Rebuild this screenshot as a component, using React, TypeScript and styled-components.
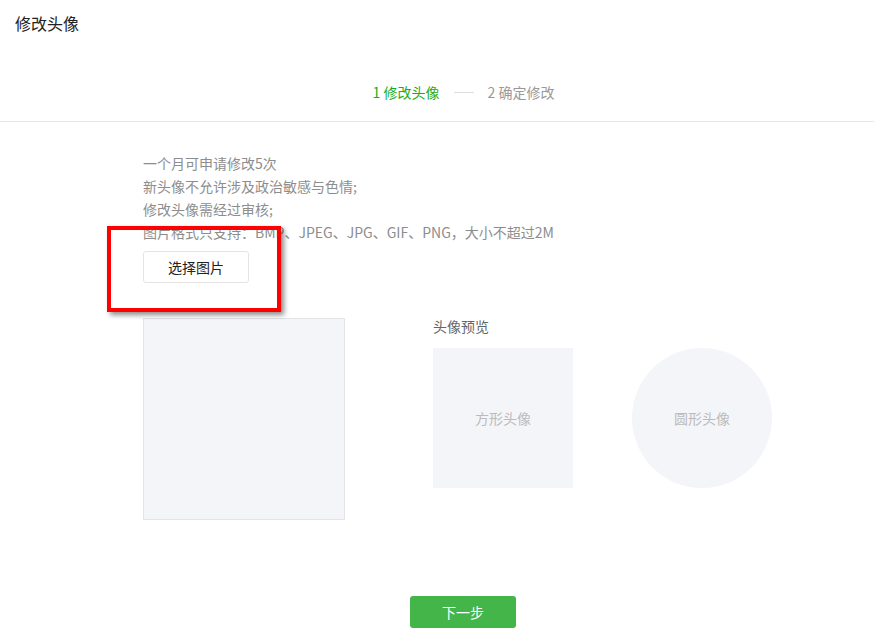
import styled, { createGlobalStyle } from "styled-components";

const GlobalStyle = createGlobalStyle`
  html, body {
    margin: 0;
    padding: 0;
    background: #fff;
  }
  body {
    font-family: "Microsoft YaHei", "Noto Sans CJK SC", "Liberation Sans", sans-serif;
    font-size: 14px;
    color: #222;
  }
`;

const Page = styled.div`
  position: relative;
  width: 874px;
  height: 641px;
  overflow: hidden;
`;

const Title = styled.h2`
  margin: 0;
  padding: 11px 15px 0;
  height: 36px;
  font-size: 16px;
  font-weight: normal;
  line-height: 24px;
  color: #222;
`;

const Steps = styled.div`
  display: flex;
  justify-content: center;
  align-items: center;
  gap: 14px;
  height: 20px;
  padding: 35px 0 19px 53px;
  border-bottom: 1px solid #e7e7eb;
`;

const Step = styled.span<{ $active?: boolean }>`
  font-size: 14px;
  line-height: 20px;
  color: ${(p) => (p.$active ? "#1aad19" : "#999")};
`;

const StepLine = styled.span`
  width: 20px;
  height: 1px;
  background: #ddd;
`;

const Body = styled.div`
  padding: 30px 0 0 143px;
`;

const Tips = styled.ul`
  list-style: none;
  margin: 0;
  padding: 0;
  color: #8d8d8d;
  font-size: 14px;
  line-height: 23px;
`;

const SelectButton = styled.button`
  display: block;
  margin-top: 7px;
  width: 106px;
  height: 32px;
  border: 1px solid #e4e4e4;
  border-radius: 3px;
  background: #fff;
  font: inherit;
  font-size: 14px;
  color: #222;
`;

const Workspace = styled.div`
  display: flex;
  margin-top: 35px;
`;

const Canvas = styled.div`
  width: 200px;
  height: 200px;
  border: 1px solid #e4e4e8;
  background: #f4f5f9;
`;

const Preview = styled.div`
  margin-left: 88px;
  margin-top: -2px;
`;

const PreviewLabel = styled.div`
  font-size: 14px;
  line-height: 20px;
  color: #666;
`;

const PreviewRow = styled.div`
  display: flex;
  gap: 59px;
  margin-top: 12px;
`;

const Avatar = styled.div<{ $round?: boolean }>`
  width: 140px;
  height: 140px;
  background: #f4f5f9;
  border-radius: ${(p) => (p.$round ? "50%" : "0")};
  display: flex;
  align-items: center;
  justify-content: center;
  color: #bbb;
  font-size: 14px;
`;

const Footer = styled.div`
  display: flex;
  justify-content: center;
  margin-top: 76px;
  padding-left: 52px;
`;

const NextButton = styled.button`
  width: 106px;
  height: 32px;
  border: none;
  border-radius: 3px;
  background: #44b549;
  color: #fff;
  font: inherit;
  font-size: 14px;
`;

const Highlight = styled.div`
  position: absolute;
  left: 107px;
  top: 226px;
  width: 174px;
  height: 86px;
  box-sizing: border-box;
  border: 4px solid #f00;
  box-shadow: 3px 3px 5px rgba(0, 0, 0, 0.45);
  pointer-events: none;
`;

export default function App() {
  return (
    <Page>
      <GlobalStyle />
      <Title>修改头像</Title>
      <Steps>
        <Step $active>1 修改头像</Step>
        <StepLine />
        <Step>2 确定修改</Step>
      </Steps>
      <Body>
        <Tips>
          <li>一个月可申请修改5次</li>
          <li>新头像不允许涉及政治敏感与色情;</li>
          <li>修改头像需经过审核;</li>
          <li>图片格式只支持：BMP、JPEG、JPG、GIF、PNG，大小不超过2M</li>
        </Tips>
        <SelectButton>选择图片</SelectButton>
        <Workspace>
          <Canvas />
          <Preview>
            <PreviewLabel>头像预览</PreviewLabel>
            <PreviewRow>
              <Avatar>方形头像</Avatar>
              <Avatar $round>圆形头像</Avatar>
            </PreviewRow>
          </Preview>
        </Workspace>
      </Body>
      <Footer>
        <NextButton>下一步</NextButton>
      </Footer>
      <Highlight />
    </Page>
  );
}
